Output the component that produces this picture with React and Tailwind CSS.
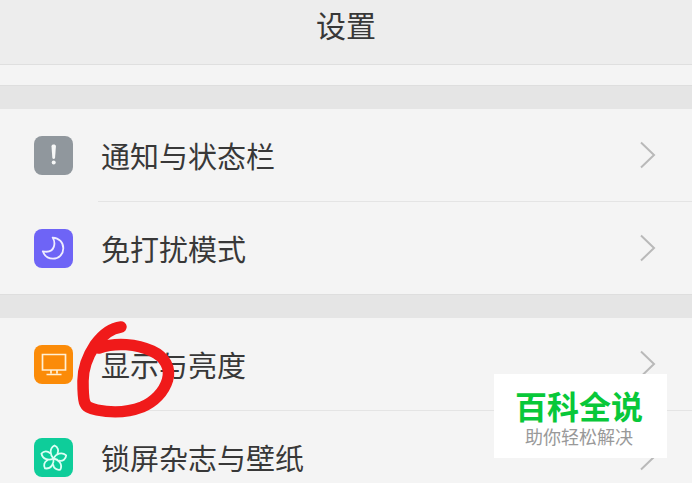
const AlertIcon = () => (
  <svg viewBox="0 0 39 39" className="size-full" fill="#f7f8f8" aria-hidden="true">
    <path d="M17.5 10.4c0-1.400.9-2 2.200-2s2.200.6 2.200 2l-.8 11.200c-.1 1-.5 1.400-1.400 1.400s-1.300-.4-1.400-1.400z" />
    <circle cx="19.700" cy="26.600" r="2" />
  </svg>
);

const MoonIcon = () => (
  <svg viewBox="0 0 39 39" className="size-full" fill="none" stroke="#efedff" strokeWidth="1.800" strokeLinejoin="round" aria-hidden="true">
    <path d="M18.700 8.600C25.300 9 29.300 13.500 29.300 19.200C29.300 25.500 24.600 29.700 19 29.700C14.300 29.700 10.500 26.900 8.800 22.300C14.500 23.500 18.500 21.700 19.800 17.900C20.900 14.700 20.500 11.500 18.700 8.600Z" />
  </svg>
);

const DisplayIcon = () => (
  <svg viewBox="0 0 39 39" className="size-full" fill="none" stroke="#fff0d5" strokeWidth="1.700" aria-hidden="true">
    <path d="M8.500 9.500H31.500V25H8.500Z" />
    <path d="M17 25V28.500M23 25V28.500M12.500 29.500H27.500" />
  </svg>
);

const petal = "M19.500 20.500C16 17 15 10.500 20.500 7.500C24 9 25 12.500 23.500 15.500";

const FlowerIcon = () => (
  <svg viewBox="0 0 39 39" className="size-full" fill="none" stroke="#dcfff4" strokeWidth="1.800" strokeLinecap="round" strokeLinejoin="round" aria-hidden="true">
    {[0, 72, 144, 216, 288].map((angle) => (
      <path key={angle} d={petal} transform={`rotate(${angle} 19.500 20.500)`} />
    ))}
  </svg>
);

const groups = [
  [
    { label: "通知与状态栏", color: "bg-[#90979d]", Icon: AlertIcon },
    { label: "免打扰模式", color: "bg-[#6e64f6]", Icon: MoonIcon },
  ],
  [
    { label: "显示与亮度", color: "bg-[#fb8b08]", Icon: DisplayIcon },
    { label: "锁屏杂志与壁纸", color: "bg-[#0ecd9a]", Icon: FlowerIcon },
  ],
];

const SettingRow = ({ label, color, Icon }) => (
  <li className="group">
    <a href="#" className="flex h-[92px] items-center pl-[34px] pr-9">
      <span className={`size-[39px] shrink-0 overflow-hidden rounded-lg ${color}`}>
        <Icon />
      </span>
      <span className="ml-7 flex-1 text-[29px] leading-10">{label}</span>
      <svg viewBox="0 0 16 28" className="h-7 w-4" fill="none" stroke="#b9b9b9" strokeWidth="2" aria-hidden="true">
        <path d="M1 1.500L14 14L1 26.500" />
      </svg>
    </a>
    <div className="ml-[98px] h-px bg-[#e4e4e4] group-last:hidden" />
  </li>
);

const App = () => {
  return (
    <div className="relative h-screen overflow-hidden bg-[#f4f4f4] font-['Noto_Sans_CJK_SC',sans-serif] text-[#383838]">
      <header className="border-b border-[#dfdfdf] bg-[#ededed] pt-1 pb-5">
        <h1 className="text-center text-[30px] leading-10">设置</h1>
      </header>
      <div className="h-5" />

      <main>
        {groups.map((rows, index) => (
          <section key={index}>
            <div className="h-6 border-t border-[#dedede] bg-[#e5e5e5]" />
            <ul>
              {rows.map((row) => (
                <SettingRow key={row.label} {...row} />
              ))}
            </ul>
          </section>
        ))}
      </main>

      {/* Hand-drawn ring around the display entry */}
      <svg
        viewBox="0 0 110 110"
        className="pointer-events-none absolute left-[72px] top-[314px] size-[110px]"
        fill="none"
        stroke="#f01a1a"
        strokeWidth="11.500"
        strokeLinecap="round"
        strokeLinejoin="round"
        aria-hidden="true"
      >
        <path d="M49 13C40 14 31 20 23 31C15 43 11 54 11 67C11 75 11 83 12.500 88C14 93 18 94.500 25 96C40 99 57 98 70 93C82 88 92 78 95.500 66C99 54 93 43 80 37C65 30 44 28 27 34" />
      </svg>

      <aside className="absolute right-[25px] bottom-[25px] bg-white pl-[21px] pr-6 pt-4 pb-2 text-center font-['Liberation_Sans','Noto_Sans_CJK_SC',sans-serif]">
        <p className="text-[32px] leading-9 font-bold text-[#08c839]">百科全说</p>
        <p className="text-[18px] leading-6 text-[#999]">助你轻松解决</p>
      </aside>
    </div>
  );
};

export default App;
